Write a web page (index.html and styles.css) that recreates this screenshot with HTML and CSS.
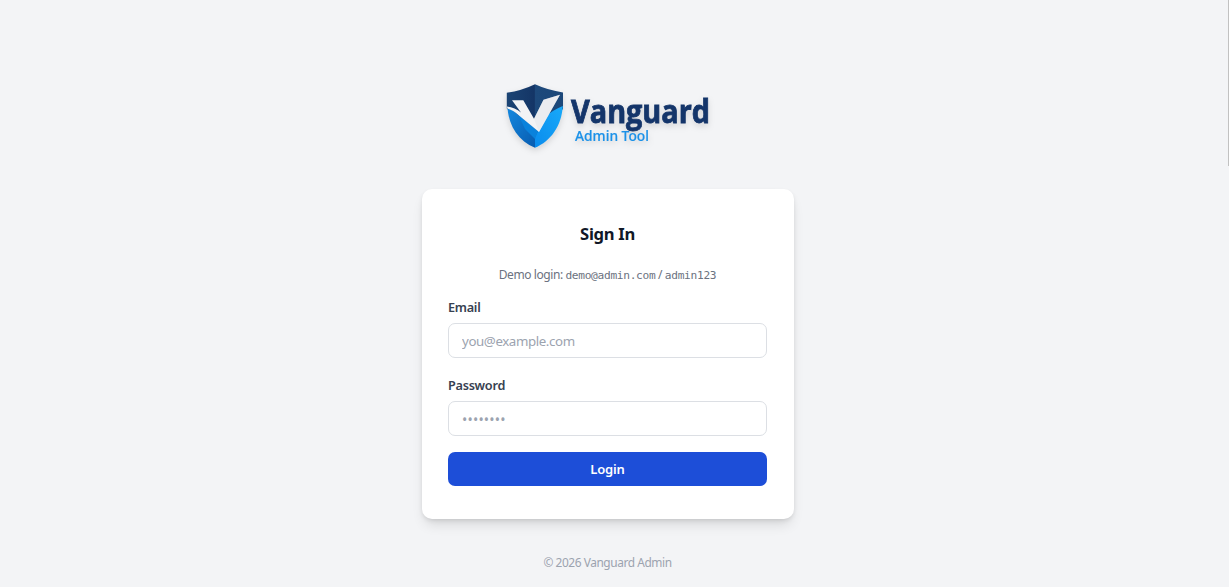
FILE: index.html
```html
<!DOCTYPE html>
<html lang="en">
<head>
<meta charset="utf-8">
<title>Vanguard Admin</title>
<link rel="stylesheet" href="styles.css">
</head>
<body>
<main class="page">
  <svg class="logo" viewBox="0 0 220 80" role="img" aria-label="Vanguard Admin Tool">
    <defs>
      <linearGradient id="navy" x1="0" y1="0" x2="1" y2="0"><stop offset="0" stop-color="#1b4474"/><stop offset=".49" stop-color="#143566"/><stop offset=".51" stop-color="#1d497b"/><stop offset="1" stop-color="#1b4779"/></linearGradient>
      <linearGradient id="deep" x1="0" y1="0" x2="1" y2="1"><stop offset="0" stop-color="#1488df"/><stop offset="1" stop-color="#0759ad"/></linearGradient>
      <linearGradient id="bright" x1="1" y1="0" x2="0" y2="1"><stop offset="0" stop-color="#18aafa"/><stop offset="1" stop-color="#0a8bec"/></linearGradient>
    </defs>
    <path fill="url(#navy)" d="M35 4.3Q48 10.3 63 12.4V29L35 56L6.8 28.5V12.8Q22 10.6 35 4.3Z"/>
    <path fill="url(#bright)" d="M38 51L46 37C50 32 56 29 62.8 26C61.5 46 51 61 35 67.8L34 52Z"/>
    <path fill="url(#deep)" d="M7.5 28C12 29 16 32 19 36L38 51L35 57V67.8C19 61 9 47 7.5 28Z"/>
    <path fill="#0a82dc" d="M18 34L38 51L35 59L25 49Z"/>
    <path fill="#f2f3f5" d="M7 26.6Q15 27.5 21 32.5L12 20.3L23.3 20.3L34 38.7L43.5 19.7L60 14.8L39 52L19 35.5Q14 30.5 7.3 28.4Z"/>
    <path fill="#dfe2e8" d="M43.5 19.7L60 14.8L39 52L34 38.7Z" opacity=".4"/>
    <text class="logo-name" x="71" y="42.7" textLength="139" lengthAdjust="spacingAndGlyphs">Vanguard</text>
    <text class="logo-sub" x="75" y="60.7" textLength="74" lengthAdjust="spacingAndGlyphs">Admin Tool</text>
  </svg>
  <form class="card">
    <h1 class="title">Sign In</h1>
    <p class="demo">Demo login: <code>demo@admin.com</code> / <code>admin123</code></p>
    <label class="label" for="email">Email</label>
    <input class="field" id="email" type="email" placeholder="you@example.com">
    <label class="label label-password" for="password">Password</label>
    <input class="field field-password" id="password" type="password" placeholder="••••••••">
    <button class="login" type="button">Login</button>
  </form>
  <footer class="footer">© 2026 Vanguard Admin</footer>
</main>
<div class="scroll-thumb"></div>
</body>
</html>
```
FILE: styles.css
```css
* { box-sizing: border-box; }
body {
  margin: 0;
  height: 587px;
  overflow: hidden;
  background: #f3f4f6;
  font-family: "Noto Sans", "Open Sans", sans-serif;
}
.page {
  display: flex;
  flex-direction: column;
  align-items: center;
  width: 1215px;
  padding-top: 80px;
}
.logo {
  width: 220px;
  height: 80px;
  margin-left: 5px;
  overflow: visible;
  filter: drop-shadow(0 3px 3px rgba(0, 0, 0, .13));
}
.logo-name {
  font-family: "Open Sans", "Noto Sans", sans-serif;
  font-size: 31.5px;
  font-weight: 700;
  fill: #14356a;
  stroke: #14356a;
  stroke-width: .8px;
}
.logo-sub {
  font-size: 14px;
  font-weight: 500;
  fill: #1b91e8;
  stroke: #1b91e8;
  stroke-width: .2px;
}
.card {
  display: flex;
  flex-direction: column;
  width: 372px;
  height: 330px;
  margin-top: 29px;
  padding: 33px 26.5px 0;
  border-radius: 10px;
  background: #fff;
  box-shadow: 0 8px 13px -3px rgba(0, 0, 0, .12), 0 2px 5px -1px rgba(0, 0, 0, .12);
}
.title {
  margin: 0;
  color: #111827;
  font-size: 16.6px;
  line-height: 24px;
  font-weight: 700;
  letter-spacing: -.3px;
  text-align: center;
}
.demo {
  margin: 20px 0 0;
  color: #6b7280;
  font-size: 12px;
  line-height: 18px;
  letter-spacing: -.42px;
  text-align: center;
  white-space: nowrap;
}
.demo code {
  font: 11.2px/16px "DejaVu Sans Mono", monospace;
  letter-spacing: -.31px;
}
.label {
  margin-top: 14px;
  color: #374151;
  font-size: 12.7px;
  line-height: 18px;
  font-weight: 600;
  letter-spacing: -.28px;
}
.label-password { margin-top: 18px; }
.field {
  height: 35px;
  margin: 7px 0 0;
  padding: 1px 13px 0;
  border: 1px solid #dcdfe4;
  border-radius: 7px;
  outline: 0;
  background: #fff;
  color: #111827;
  font: 13.3px "Noto Sans", "Open Sans", sans-serif;
  letter-spacing: -.4px;
}
.field-password { letter-spacing: .2px; font-size: 14px; }
.field::placeholder { color: #9ca3af; opacity: 1; }
.login {
  height: 34px;
  margin-top: 16px;
  padding: 0;
  border: 0;
  border-radius: 7px;
  background: #1d4ed8;
  color: #fff;
  font: 600 13px "Noto Sans", "Open Sans", sans-serif;
  letter-spacing: -.15px;
}
.footer {
  margin-top: 34px;
  color: #9ca3af;
  font-size: 11.9px;
  line-height: 18px;
  letter-spacing: -.42px;
}
.scroll-thumb {
  position: absolute;
  top: 0;
  right: 0;
  width: 1px;
  height: 166px;
  background: #c1c1c1;
}
```
